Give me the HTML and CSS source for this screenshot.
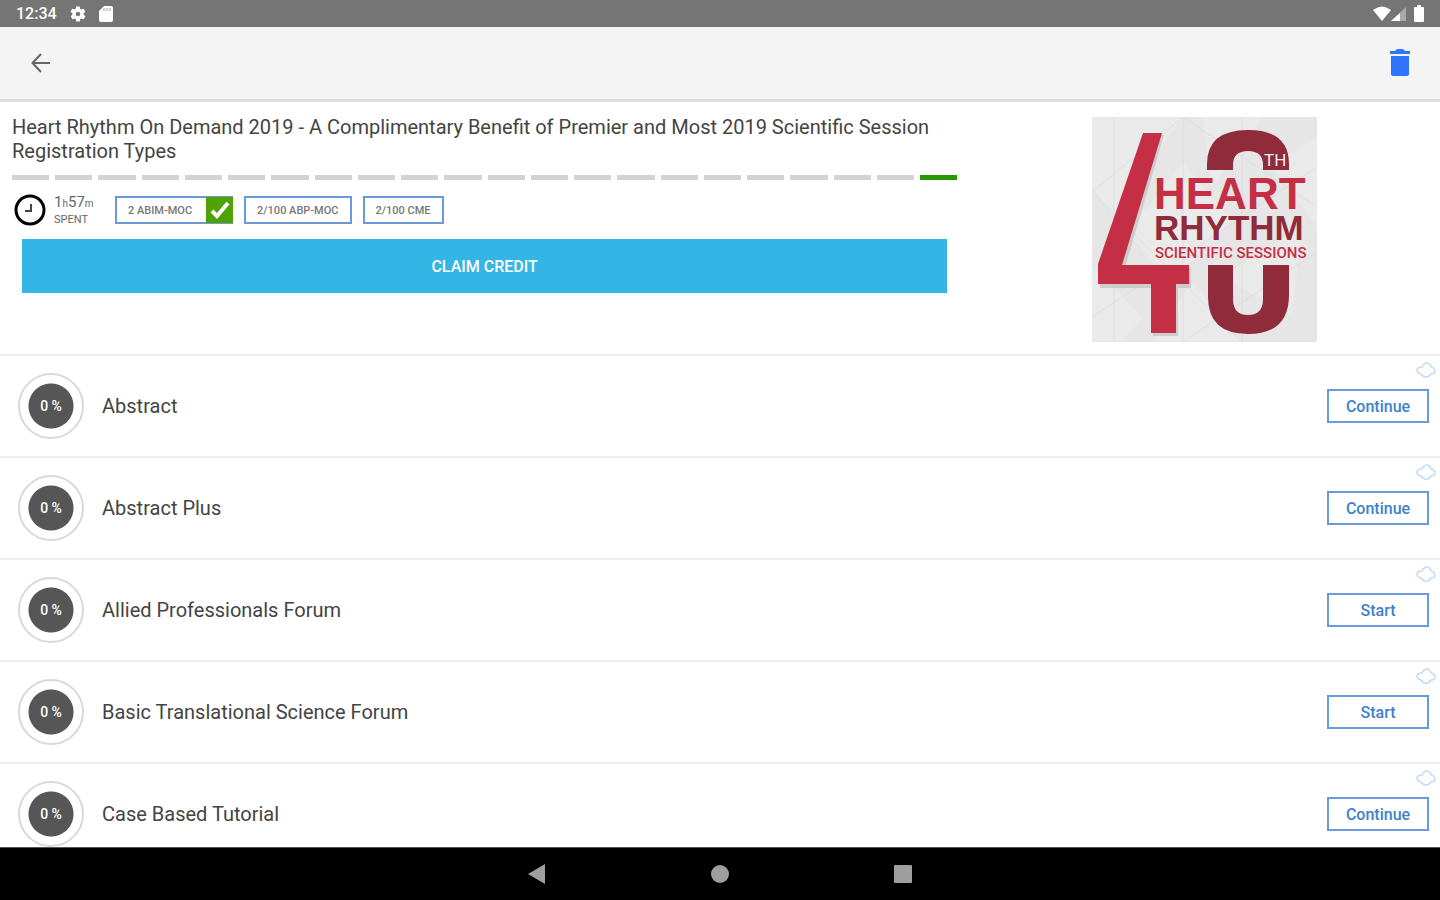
FILE: index.html
```html
<!DOCTYPE html>
<html lang="en">

<head>
  <meta charset="utf-8" />
  <meta name="viewport" content="width=device-width, initial-scale=1">
  <title>Heart Rhythm On Demand 2019</title>
  <link rel="stylesheet" href="styles.css">
</head>

<body>
  <div class="status-bar">
    <span class="clock">12:34</span>
    <svg class="status-gear" width="18" height="18" viewBox="0 0 24 24">
      <path fill="#fff" fill-rule="evenodd" d="M19.4 13c0-.3.1-.6.1-1s0-.7-.1-1l2.1-1.600c.2-.2.3-.4.1-.6l-2-3.500c-.1-.2-.4-.3-.6-.2l-2.500 1c-.5-.4-1.100-.7-1.700-1L14.400 2.400c0-.2-.2-.4-.5-.4h-4c-.2 0-.5.2-.5.4L9 5.100c-.6.300-1.200.6-1.700 1l-2.500-1c-.2-.1-.5 0-.6.2l-2 3.500c-.1.2-.1.5.1.6L4.500 11c0 .3-.1.6-.1 1s0 .7.1 1l-2.100 1.600c-.2.2-.3.4-.1.600l2 3.500c.1.2.4.3.6.2l2.500-1c.5.4 1.100.7 1.700 1l.4 2.700c0 .2.2.4.5.4h4c.2 0 .5-.2.5-.4l.4-2.700c.6-.3 1.200-.6 1.700-1l2.500 1c.2.1.5 0 .6-.2l2-3.500c.1-.2.1-.5-.1-.6zM12 15a3 3 0 1 1 0-6 3 3 0 0 1 0 6z" />
    </svg>
    <svg width="14" height="18" viewBox="0 0 14 18">
      <path fill="#fff" d="M5 1h7a2 2 0 0 1 2 2v12a2 2 0 0 1-2 2H2a2 2 0 0 1-2-2V6z" />
      <path stroke="#999" d="M5 3v3M8 3v3M11 3v3" />
    </svg>
    <div class="status-right">
      <svg width="18" height="16" viewBox="0 0 18 16">
        <path fill="#fff" d="M0 4Q9-3 18 4L9 15z" />
      </svg>
      <svg width="15" height="16" viewBox="0 0 15 16">
        <path fill="#aaa" d="M15 1v14H0z" />
        <path fill="#fff" d="M9 7v8H0z" />
      </svg>
      <svg class="battery" width="10" height="17" viewBox="0 0 10 17">
        <path fill="#fff" d="M3 0h4v2h2q1 0 1 1v13q0 1-1 1H1q-1 0-1-1V3q0-1 1-1h2z" />
      </svg>
    </div>
  </div>

  <header class="toolbar">
    <button class="icon-button" aria-label="Back">
      <svg width="20" height="20" viewBox="0 0 20 20">
        <path d="M19 10H2M10 1L1.500 10l8.500 9" fill="none" stroke="#666" stroke-width="2" />
      </svg>
    </button>
    <button class="icon-button" aria-label="Delete">
      <svg width="22" height="28" viewBox="0 0 22 28">
        <path fill="#2f74fa" d="M1 2h5l2-2h6l2 2h5v3H1zM2 7h18v18q0 2-2 2H4q-2 0-2-2z" />
      </svg>
    </button>
  </header>

  <section class="course">
    <div class="course-info">
      <h1>Heart Rhythm On Demand 2019 - A Complimentary Benefit of Premier and Most 2019 Scientific Session Registration Types</h1>
      <div class="progress">
        <i></i><i></i><i></i><i></i><i></i><i></i><i></i><i></i><i></i><i></i><i></i>
        <i></i><i></i><i></i><i></i><i></i><i></i><i></i><i></i><i></i><i></i><i class="done"></i>
      </div>
      <div class="stats">
        <svg width="32" height="32" viewBox="0 0 32 32">
          <circle cx="16" cy="16" r="14" fill="none" stroke="#000" stroke-width="3" />
          <path d="M17 10v7h-6" fill="none" stroke="#444" stroke-width="2" />
        </svg>
        <div class="spent">
          <p class="time">1<small>h</small>57<small>m</small></p>
          <p class="label">SPENT</p>
        </div>
        <ul class="credits">
          <li class="earned">2 ABIM-MOC
            <svg width="27" height="26" viewBox="0 0 27 26">
              <path fill="#4fa301" d="M0 0h27v26H0z" />
              <path d="M6 14l5 5L22 6" fill="none" stroke="#fff" stroke-width="4" />
            </svg>
          </li>
          <li>2/100 ABP-MOC</li>
          <li>2/100 CME</li>
        </ul>
      </div>
      <button class="claim">CLAIM CREDIT</button>
    </div>

    <div class="course-logo">
      <svg width="225" height="225" viewBox="0 0 225 225" role="img" aria-label="40th Heart Rhythm Scientific Sessions">
        <path fill="#e6e6e7" d="M0 0h225v225H0z" />
        <path fill="#eaeaeb" d="M0 0h90L22 100 0 70zM91 45l50 60-65 60-40-50zM110 0h60l-50 70zM225 20v90l-45-60zM0 150l50 50-20 25H0zM130 160l80-50-10 90zM60 225l40-60 50 60z" />
        <path fill="none" stroke="#dedee0" d="M22 0v225M91 0v225M0 75L91 0l134 90M0 75l150 150M0 200l225-150M91 225l134-90M150 0v225" />
        <path fill="#bbb" d="M53 18h19L33 151h66v20H86v48H61v-48H8v-22z" opacity=".6" />
        <path fill="#c52f45" d="M51 16h19L30 148h67v19H84v49H59v-49H6v-20z" />
        <path fill="#8f2b3b" d="M115 53V47Q115 13 156 13T197 47v6h-26v-5q0-14-15-14t-15 14v5zM116 148h25v34q0 16 15 16t15-16v-34h26v30q0 39-41 39t-40-39z" />
        <g font-family="Liberation Sans, sans-serif" font-weight="700">
          <text x="172" y="49" fill="#eee" font-family="Roboto, sans-serif" font-size="17" font-weight="400">TH</text>
          <text x="62" y="92" fill="#c52f45" font-size="44">HEART</text>
          <text x="62" y="123" fill="#8f2b3b" font-size="35">RHYTHM</text>
        </g>
        <text x="63" y="141" fill="#c52f45" font-family="Roboto, sans-serif" font-size="15" font-weight="500">SCIENTIFIC SESSIONS</text>
      </svg>
    </div>
  </section>

  <svg class="defs" width="0" height="0">
    <symbol id="cloud" viewBox="0 0 20 16">
      <path d="M5 12Q1 11 1 8t5-3q2-4 5-4t4 4q4 1 4 4t-4 3q-2 3-5 3t-5-3z" fill="none" stroke="#c3d9fb" stroke-width="1.500" />
    </symbol>
  </svg>

  <main class="topics">
    <article class="topic">
      <span class="percent">0 %</span>
      <h2>Abstract</h2>
      <svg class="cloud"><use href="#cloud" /></svg>
      <button>Continue</button>
    </article>
    <article class="topic">
      <span class="percent">0 %</span>
      <h2>Abstract Plus</h2>
      <svg class="cloud"><use href="#cloud" /></svg>
      <button>Continue</button>
    </article>
    <article class="topic">
      <span class="percent">0 %</span>
      <h2>Allied Professionals Forum</h2>
      <svg class="cloud"><use href="#cloud" /></svg>
      <button>Start</button>
    </article>
    <article class="topic">
      <span class="percent">0 %</span>
      <h2>Basic Translational Science Forum</h2>
      <svg class="cloud"><use href="#cloud" /></svg>
      <button>Start</button>
    </article>
    <article class="topic">
      <span class="percent">0 %</span>
      <h2>Case Based Tutorial</h2>
      <svg class="cloud"><use href="#cloud" /></svg>
      <button>Continue</button>
    </article>
  </main>

  <nav class="system-nav">
    <button aria-label="Back">
      <svg width="18" height="20" viewBox="0 0 18 20"><path fill="#9e9e9e" d="M17 0v20L0 10z" /></svg>
    </button>
    <button aria-label="Home">
      <svg width="18" height="18" viewBox="0 0 18 18"><circle fill="#9e9e9e" cx="9" cy="9" r="9" /></svg>
    </button>
    <button aria-label="Recent apps">
      <svg width="18" height="18" viewBox="0 0 18 18"><rect fill="#9e9e9e" width="18" height="18" rx="1" /></svg>
    </button>
  </nav>
</body>

</html>
```
FILE: styles.css
```css
* {
  margin: 0;
  padding: 0;
  box-sizing: border-box;
}

body {
  display: flex;
  flex-direction: column;
  height: 100vh;
  overflow: hidden;
  background-color: #fff;
  color: #444;
  font-family: Roboto, "Liberation Sans", sans-serif;
}

button {
  border: none;
  background: none;
  font-family: inherit;
  cursor: pointer;
}

svg {
  display: block;
  flex: none;
}

.defs {
  position: absolute;
}

.status-bar {
  display: flex;
  flex: none;
  align-items: center;
  height: 27px;
  padding: 0 16px;
  background-color: #757575;
  color: #fff;
}

.clock {
  font-size: 16px;
  font-weight: 500;
}

.status-gear {
  margin: 0 12px;
}

.status-right {
  display: flex;
  align-items: center;
  margin-left: auto;
}

.battery {
  margin-left: 8px;
}

.toolbar {
  display: flex;
  flex: none;
  align-items: center;
  justify-content: space-between;
  height: 75px;
  padding: 0 27px 0 29px;
  border-bottom: 3px solid #dcdcdc;
  background-color: #f4f4f4;
}

.icon-button {
  padding: 2px;
}

.course {
  display: grid;
  flex: none;
  grid-template-columns: 35fr 17fr;
  min-height: 252px;
}

.course-info {
  padding: 13px 12px;
}

h1 {
  font-size: 20px;
  font-weight: 400;
  line-height: 24px;
}

.progress {
  display: grid;
  grid-template-columns: repeat(22, 1fr);
  gap: 6px;
  margin-top: 12px;
}

.progress i {
  height: 5px;
  background-color: #d3d3d3;
}

.progress .done {
  background-color: #279600;
}

.stats {
  display: flex;
  align-items: center;
  height: 32px;
  margin: 14px 2px 13px;
}

.spent {
  width: 61px;
  margin-left: 8px;
  color: #666;
}

.time {
  font-size: 15px;
  line-height: 17px;
}

.time small {
  font-size: 10px;
}

.label {
  font-size: 11px;
  line-height: 15px;
}

.credits {
  display: flex;
  gap: 11px;
  list-style: none;
}

.credits li {
  display: flex;
  align-items: center;
  height: 28px;
  padding: 0 11px;
  border: 2px solid #6c97da;
  color: #777;
  font-size: 11px;
  font-weight: 500;
}

.credits .earned {
  gap: 14px;
  padding-right: 0;
  border-right: none;
}

.claim {
  display: block;
  width: calc(100% - 20px);
  height: 54px;
  margin: 0 auto;
  background-color: #33b5e5;
  color: #fff;
  font-size: 16px;
  font-weight: 500;
}

.course-logo {
  display: flex;
  justify-content: center;
  padding-top: 15px;
}

.topics {
  flex: 1;
  min-height: 0;
  overflow: hidden;
  border-top: 2px solid #efefef;
}

.topic {
  display: flex;
  position: relative;
  align-items: center;
  height: 102px;
  padding: 0 11px 0 18px;
  border-bottom: 2px solid #efefef;
}

.percent {
  display: flex;
  align-items: center;
  justify-content: center;
  width: 66px;
  height: 66px;
  border: 2px solid #d9d9d9;
  border-radius: 50%;
  background: radial-gradient(circle, #565656 22px, #fff 23px);
  color: #fff;
  font-size: 14px;
  font-weight: 500;
}

h2 {
  flex: 1;
  margin-left: 18px;
  font-size: 20px;
  font-weight: 400;
}

.topic button {
  width: 102px;
  height: 34px;
  border: 2px solid #6a9bd8;
  background-color: #fff;
  color: #3c83cc;
  font-size: 16px;
  font-weight: 500;
}

.cloud {
  position: absolute;
  top: 6px;
  right: 4px;
  width: 20px;
  height: 16px;
}

.system-nav {
  display: flex;
  flex: none;
  align-items: center;
  justify-content: center;
  gap: 165px;
  height: 53px;
  border-top: 1px solid #555;
  background-color: #000;
}
```
